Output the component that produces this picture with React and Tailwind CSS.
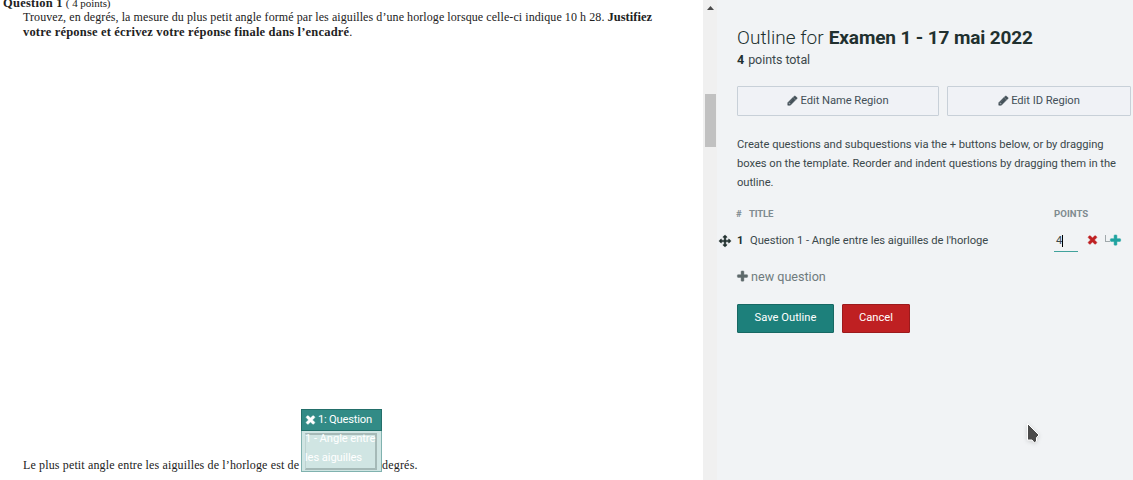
const PATHS = {
  pencil:
    "M491 1536l91-91-235-235-91 91v107h128v128h107zm523-928q0-22-22-22-10 0-17 7l-542 542q-7 7-7 17 0 22 22 22 10 0 17-7l542-542q7-7 7-17zm-54-192l416 416-832 832h-416v-416zm683 96q0 53-37 90l-166 166-416-416 166-165q36-38 90-38 53 0 91 38l235 234q37 39 37 91z",
  times:
    "M1490 1322q0 40-28 68l-136 136q-28 28-68 28t-68-28l-294-294-294 294q-28 28-68 28t-68-28l-136-136q-28-28-28-68t28-68l294-294-294-294q-28-28-28-68t28-68l136-136q28-28 68-28t68 28l294 294 294-294q28-28 68-28t68 28l136 136q28 28 28 68t-28 68l-294 294 294 294q28 28 28 68z",
  plus:
    "M1600 736v192q0 40-28 68t-68 28h-416v416q0 40-28 68t-68 28h-192q-40 0-68-28t-28-68v-416h-416q-40 0-68-28t-28-68v-192q0-40 28-68t68-28h416v-416q0-40 28-68t68-28h192q40 0 68 28t28 68v416h416q40 0 68 28t28 68z",
  move:
    "M1792 896q0 26-19 45l-256 256q-19 19-45 19t-45-19-19-45v-128h-384v384h128q26 0 45 19t19 45-19 45l-256 256q-19 19-45 19t-45-19l-256-256q-19-19-19-45t19-45 45-19h128v-384h-384v128q0 26-19 45t-45 19-45-19l-256-256q-19-19-19-45t19-45l256-256q19-19 45-19t45 19 19 45v128h384v-384h-128q-26 0-45-19t-19-45 19-45l256-256q19-19 45-19t45 19l256 256q19 19 19 45t-19 45-45 19h-128v384h384v-128q0-26 19-45t45-19 45 19l256 256q19 19 19 45z",
};

function Icon({ name, className }) {
  return (
    <svg viewBox="0 0 1792 1792" fill="currentColor" className={"shrink-0 overflow-visible " + className}>
      <path d={PATHS[name]} />
    </svg>
  );
}

function RegionBox() {
  return (
    <div className="absolute top-[409px] left-[301px] flex h-[63px] w-[81px] flex-col border border-[#2b7f7a]/60 font-['Roboto',sans-serif] text-[11.2px] text-white">
      <div className="-mx-px -mt-px flex h-[22px] shrink-0 items-center border border-[#236f6a] bg-[#328b86] pb-px pl-1">
        <Icon name="times" className="-ml-[2px] mr-px size-[13px] stroke-current stroke-[60]" />
        <span className="tracking-[-0.22px] whitespace-nowrap">1: Question</span>
      </div>
      <div className="relative flex-1 bg-[#d0e5e3] pl-1 leading-[19px]">
        <div className="absolute top-[2px] left-[3px] h-[37px] w-[72px] border-t-2 border-r-2 border-b-2 border-l border-[#a5b9b7] border-l-[#bdd3d1]" />
        <div className="relative -mt-[2px] -ml-px tracking-[-0.08px] whitespace-nowrap">1 - Angle entre</div>
        <div className="relative -ml-px tracking-[-0.1px] whitespace-nowrap">les aiguilles</div>
      </div>
    </div>
  );
}

function ExamPage() {
  return (
    <main className="relative flex w-[703px] shrink-0 flex-col overflow-hidden bg-white font-['Liberation_Serif',serif] text-[12px] leading-[15px] whitespace-nowrap text-[#222]">
      <div className="-mt-[4px] ml-[3px] flex h-[14px] items-center gap-[3px]">
        <b className="text-[12.5px] tracking-[0.25px]">Question 1</b>
        <span className="text-[11px] tracking-[-0.05px]">( 4 points)</span>
      </div>
      <p className="ml-[23px]">
        <span className="tracking-[0.075px]">
          Trouvez, en degrés, la mesure du plus petit angle formé par les aiguilles d’une horloge lorsque celle-ci indique 10 h 28.
        </span>{" "}
        <b className="text-[12.5px] tracking-[0.02px]">Justifiez</b>
      </p>
      <p className="ml-[23px]">
        <b className="text-[12.5px] tracking-[0.18px]">votre réponse et écrivez votre réponse finale dans l’encadré</b>.
      </p>
      <p className="mt-auto mb-[7px] ml-[23px] flex">
        <span className="w-[359px] tracking-[0.14px]">Le plus petit angle entre les aiguilles de l’horloge est de</span>
        <span className="tracking-[0.2px]">degrés.</span>
      </p>
      <RegionBox />
    </main>
  );
}

function Scrollbar() {
  return (
    <div className="flex w-[14px] shrink-0 flex-col bg-[#f0f0f0]">
      <svg viewBox="0 0 7 4" className="mt-[6px] ml-1 h-1 w-[7px]" fill="#4a4a4a">
        <path d="M3.5 0L7 4H0z" />
      </svg>
      <div className="mt-[84px] ml-[2px] h-[53px] w-[11px] bg-[#c1c1c1]" />
    </div>
  );
}

function EditButton({ label, className }) {
  return (
    <button className={"flex h-[30px] items-center justify-center gap-[2px] rounded-[1px] border border-[#c8d0d8] bg-[#f0f2f6] text-[#435058] " + className}>
      <Icon name="pencil" className="mb-px size-[11px] stroke-current stroke-[90]" />
      <span className="tracking-[-0.04px]">{label}</span>
    </button>
  );
}

function Outline() {
  return (
    <aside className="flex min-w-0 flex-1 flex-col overflow-hidden bg-[#f1f3f5] pl-5 font-['Roboto',sans-serif] text-[11.2px] whitespace-nowrap text-[#3b484b]">
      <h1 className="mt-[26px] flex h-6 items-center gap-[5px] text-[19px] text-[#21302f]">
        <span className="font-light tracking-[0.05px]">Outline for</span>
        <b className="tracking-[-0.13px]">Examen 1 - 17 mai 2022</b>
      </h1>
      <div className="mt-px flex h-[18px] items-center gap-1 text-[12.5px]">
        <b className="text-[#21302f]">4</b>
        <span className="tracking-[-0.07px]">points total</span>
      </div>
      <div className="mt-[17px] flex gap-2">
        <EditButton label="Edit Name Region" className="w-[202px]" />
        <EditButton label="Edit ID Region" className="w-[184px]" />
      </div>
      <p className="mt-[19px] leading-[19px] tracking-[-0.03px]">
        Create questions and subquestions via the + buttons below, or by dragging
        <br />
        boxes on the template. Reorder and indent questions by dragging them in the
        <br />
        outline.
      </p>
      <div className="mt-[14px] flex h-4 items-center text-[9.6px] font-bold text-[#7f8b90]">
        <span className="-ml-px w-[13px]">#</span>
        <span className="w-[305px] tracking-[-0.2px]">TITLE</span>
        <span className="tracking-[0.04px]">POINTS</span>
      </div>
      <div className="-ml-[18px] mt-[8px] flex h-[22px] items-center">
        <Icon name="move" className="mb-px size-[12px] stroke-current stroke-[50] text-[#21302f]" />
        <b className="ml-[6px] w-[13px] text-[#21302f]">1</b>
        <span className="w-[304px] tracking-[-0.035px]">Question 1 - Angle entre les aiguilles de l'horloge</span>
        <span className="flex h-[21px] w-[24px] items-center border-b border-[#41a29c] pt-px pl-[2px]">
          <span>4</span>
          <span className="h-[12px] w-px bg-black" />
        </span>
        <Icon name="times" className="mb-[3px] ml-[8px] size-[13px] stroke-current stroke-[60] text-[#bf2022]" />
        <span className="mb-[5px] ml-[6px] h-[7px] w-[5px] border-b border-l border-[#a0a8ab]" />
        <Icon name="plus" className="mb-[2px] -ml-px size-[13px] stroke-current stroke-[70] text-[#1fa3a0]" />
      </div>
      <div className="mt-[15px] flex h-5 items-center gap-[2px] text-[12.6px] text-[#6f7b7d]">
        <Icon name="plus" className="mb-px -ml-px size-[13px] stroke-current stroke-[60] text-[#5d696a]" />
        <span>new question</span>
      </div>
      <div className="mt-[17px] flex gap-2 text-white">
        <button className="h-[29px] w-[97px] rounded-[1px] border border-[#176863] bg-[#1d807b]">Save Outline</button>
        <button className="h-[29px] w-[68px] rounded-[1px] border border-[#9c1a1c] bg-[#bf2022]">Cancel</button>
      </div>
    </aside>
  );
}

export default function App() {
  return (
    <div className="relative flex h-[480px] w-[1133px] overflow-hidden">
      <ExamPage />
      <Scrollbar />
      <Outline />
      <svg viewBox="0 0 14 22" className="absolute top-[422px] left-[1026px] h-[22px] w-[14px] drop-shadow-sm">
        <path d="M1.5 1.5V18H6L8.5 21L10.5 19V15.5L13 13z" fill="#4a4a4a" stroke="#fff" />
      </svg>
    </div>
  );
}
